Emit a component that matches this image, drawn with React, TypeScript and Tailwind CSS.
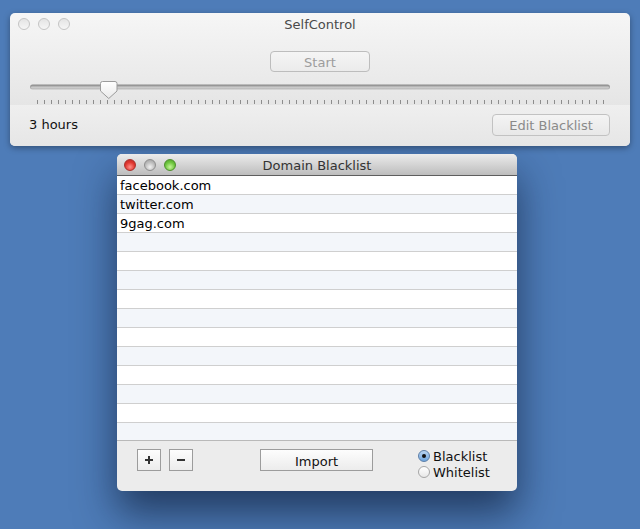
const font = { fontFamily: '"DejaVu Sans", "Lucida Grande", Verdana, sans-serif' };

const domains = ["facebook.com", "twitter.com", "9gag.com"];

function Light({ color }: { color?: "red" | "gray" | "green" | "off" }) {
  if (color === "red")
    return <span className="block w-[12px] h-[12px] rounded-full border border-[#a8302c] bg-[radial-gradient(circle_at_50%_70%,#ff8f88,#e0362f_55%,#b82a24)]" />;
  if (color === "green")
    return <span className="block w-[12px] h-[12px] rounded-full border border-[#4d8f2c] bg-[radial-gradient(circle_at_50%_70%,#c6f59a,#6ec63e_55%,#4f9a2a)]" />;
  if (color === "gray")
    return <span className="block w-[12px] h-[12px] rounded-full border border-[#8e8e8e] bg-[radial-gradient(circle_at_50%_70%,#f2f2f2,#bdbdbd_55%,#9d9d9d)]" />;
  return <span className="block w-[12px] h-[12px] rounded-full border border-[#c4c4c4] bg-gradient-to-b from-[#e4e4e4] to-[#f6f6f6]" />;
}

function Slider() {
  const ticks = Array.from({ length: 82 }, (_, i) => 27 + i * 6.99);
  return (
    <svg width="620" height="33" viewBox="0 0 620 33" className="block">
      <defs>
        <linearGradient id="trk" x1="0" y1="0" x2="0" y2="1">
          <stop offset="0" stopColor="#8c8c8c" />
          <stop offset="1" stopColor="#bdbdbd" />
        </linearGradient>
        <linearGradient id="knob" x1="0" y1="0" x2="0" y2="1">
          <stop offset="0" stopColor="#ffffff" />
          <stop offset="1" stopColor="#e9e9e9" />
        </linearGradient>
      </defs>
      <rect x="20" y="12.5" width="580" height="5" rx="2.5" fill="url(#trk)" />
      <rect x="21" y="14.5" width="578" height="2" rx="1" fill="#c9c9c9" />
      {ticks.map((x, i) => (
        <rect key={i} x={Math.round(x)} y="28" width="1" height="4" fill="#8d8d8d" />
      ))}
      <path d="M90.5 11.5 Q90.5 9.5 92.5 9.5 L105 9.5 Q107 9.5 107 11.5 L107 19 L98.75 26.5 L90.5 19 Z" fill="url(#knob)" stroke="#9b9b9b" strokeWidth="1" />
    </svg>
  );
}

export default function App() {
  return (
    <div className="w-[640px] h-[529px] overflow-hidden bg-[#4e7cb8] pt-[13px]" style={font}>
      {/* SelfControl main window */}
      <div className="ml-[10px] w-[620px] h-[133px] rounded-[5px] overflow-hidden flex flex-col shadow-[0_2px_6px_rgba(0,0,0,0.35)] bg-gradient-to-b from-[#f6f6f6] to-[#dedede]">
        <div className="h-[22px] grid grid-cols-[1fr_auto_1fr] items-center">
          <div className="flex gap-[8px] pl-[8px]">
            <Light />
            <Light />
            <Light />
          </div>
          <div className="text-[13px] text-[#4a4a4a] leading-none pt-[1px]">SelfControl</div>
          <div />
        </div>
        <div className="flex justify-center mt-[16px]">
          <button className="w-[100px] h-[21px] rounded-[4px] border border-[#bdbdbd] bg-gradient-to-b from-[#f5f5f5] to-[#ebebeb] text-[13px] text-[#9d9d9d] leading-none pt-[2px]">
            Start
          </button>
        </div>
        <Slider />
        <div className="flex-1 bg-gradient-to-b from-[#efefef] to-[#e6e6e6] flex items-center justify-between pl-[19px] pr-[20px] pb-[2px]">
          <span className="text-[13px] text-[#111]">3 hours</span>
          <button className="w-[118px] h-[22px] rounded-[4px] border border-[#c2c2c2] bg-gradient-to-b from-[#f4f4f4] to-[#e8e8e8] text-[13px] text-[#8a8a8a] leading-none pt-[1px]">
            Edit Blacklist
          </button>
        </div>
      </div>

      {/* Domain Blacklist window */}
      <div className="ml-[117px] mt-[8px] w-[400px] h-[337px] rounded-[5px] overflow-hidden flex flex-col bg-[#ececec] shadow-[0_22px_40px_rgba(10,25,50,0.65)]">
        <div className="h-[22px] shrink-0 grid grid-cols-[1fr_auto_1fr] items-center bg-gradient-to-b from-[#ececec] to-[#bdbdbd] border-b border-[#5e5e5e]">
          <div className="flex gap-[8px] pl-[7px]">
            <Light color="red" />
            <Light color="gray" />
            <Light color="green" />
          </div>
          <div className="text-[13px] text-[#333] leading-none pt-[1px]">Domain Blacklist</div>
          <div />
        </div>
        <div className="h-[264px] shrink-0 overflow-hidden bg-white">
          {Array.from({ length: 14 }, (_, i) => (
            <div
              key={i}
              className={`h-[19px] border-b border-[#cfcfcf] pl-[3px] pt-[2px] text-[13px] leading-[16px] text-black ${i % 2 === 0 ? "bg-white" : "bg-[#f3f6fa]"}`}
            >
              {domains[i] ?? ""}
            </div>
          ))}
        </div>
        <div className="flex-1 border-t border-[#b9b9b9] flex items-start pl-[20px] pt-[8px]">
          <button className="w-[24px] h-[22px] border border-[#9c9c9c] bg-gradient-to-b from-[#fdfdfd] to-[#ececec] flex items-center justify-center">
            <svg width="10" height="10" viewBox="0 0 10 10">
              <path d="M5 1v8M1 5h8" stroke="#333" strokeWidth="2" />
            </svg>
          </button>
          <button className="ml-[8px] w-[24px] h-[22px] border border-[#9c9c9c] bg-gradient-to-b from-[#fdfdfd] to-[#ececec] flex items-center justify-center">
            <svg width="10" height="10" viewBox="0 0 10 10">
              <path d="M1 5h8" stroke="#333" strokeWidth="2" />
            </svg>
          </button>
          <button className="ml-[67px] w-[113px] h-[22px] border border-[#9c9c9c] bg-gradient-to-b from-[#fdfdfd] to-[#ececec] text-[13px] text-[#111] leading-none pt-[2px]">
            Import
          </button>
          <div className="ml-[45px] flex flex-col -mt-[1px]">
            <div className="flex items-center h-[16px] gap-[3px]">
              <span className="w-[12px] h-[12px] rounded-full border border-[#5b7ea8] bg-gradient-to-b from-[#b9d4f0] to-[#6fa6df] flex items-center justify-center">
                <span className="w-[4px] h-[4px] rounded-full bg-[#111]" />
              </span>
              <span className="text-[13px] text-[#111] leading-none">Blacklist</span>
            </div>
            <div className="flex items-center h-[16px] gap-[3px]">
              <span className="w-[12px] h-[12px] rounded-full border border-[#a6a6a6] bg-gradient-to-b from-[#ffffff] to-[#e8e8e8]" />
              <span className="text-[13px] text-[#111] leading-none">Whitelist</span>
            </div>
          </div>
        </div>
      </div>
    </div>
  );
}
